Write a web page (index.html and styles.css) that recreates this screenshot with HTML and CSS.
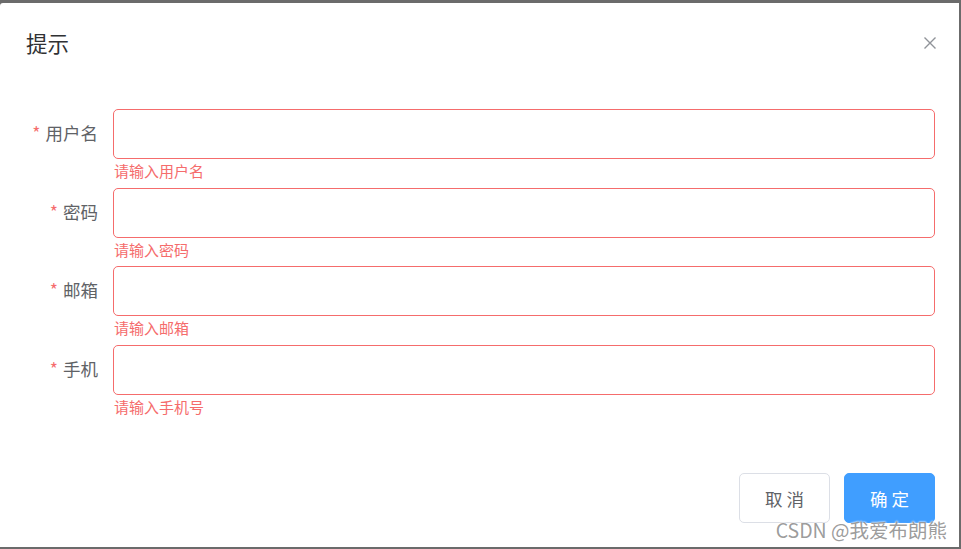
FILE: index.html
```html
<!DOCTYPE html>
<html lang="zh">
<head>
<meta charset="utf-8">
<title>提示</title>
<link rel="stylesheet" href="styles.css">
</head>
<body>
<div class="dialog">
  <div class="dialog-header">
    <span class="dialog-title">提示</span>
    <button class="dialog-close" aria-label="关闭">
      <svg width="14" height="14" viewBox="0 0 14 14"><path d="M1.5 1.5 L12.5 12.5 M12.5 1.5 L1.5 12.5" stroke="#909399" stroke-width="1.4" fill="none"/></svg>
    </button>
  </div>
  <div class="dialog-body">
    <form class="form">
      <div class="form-item">
        <label class="form-label"><span class="req">*</span>用户名</label>
        <div class="form-content">
          <input class="input" type="text">
          <div class="form-error">请输入用户名</div>
        </div>
      </div>
      <div class="form-item">
        <label class="form-label"><span class="req">*</span>密码</label>
        <div class="form-content">
          <input class="input" type="password">
          <div class="form-error">请输入密码</div>
        </div>
      </div>
      <div class="form-item">
        <label class="form-label"><span class="req">*</span>邮箱</label>
        <div class="form-content">
          <input class="input" type="text">
          <div class="form-error">请输入邮箱</div>
        </div>
      </div>
      <div class="form-item">
        <label class="form-label"><span class="req">*</span>手机</label>
        <div class="form-content">
          <input class="input" type="text">
          <div class="form-error">请输入手机号</div>
        </div>
      </div>
    </form>
  </div>
  <div class="dialog-footer">
    <button class="btn btn-default">取消</button>
    <button class="btn btn-primary">确定</button>
  </div>
  <div class="watermark">CSDN @我爱布朗熊</div>
</div>
</body>
</html>
```
FILE: styles.css
```css
* { box-sizing: border-box; }
html, body { margin: 0; padding: 0; }
body {
  background: #6b6b6b;
  width: 961px;
  height: 549px;
  overflow: hidden;
  font-family: "Noto Sans CJK SC", "Liberation Sans", sans-serif;
}
.dialog {
  position: relative;
  margin: 3px 2px 2px 0;
  height: 544px;
  background: #fff;
  border-radius: 3px 0 0 0;
  display: flex;
  flex-direction: column;
}
.dialog-header {
  padding: 25px 25px 12px 26px;
  display: flex;
  align-items: center;
  justify-content: space-between;
}
.dialog-title {
  font-size: 21.5px;
  line-height: 30px;
  color: #303133;
}
.dialog-close {
  border: 0;
  background: none;
  padding: 0;
  margin-right: -3px;
  width: 14px;
  height: 14px;
  display: flex;
  cursor: pointer;
}
.dialog-body {
  padding: 39px 24px 38px 25px;
}
.form {
  display: flex;
  flex-direction: column;
  gap: 28.5px;
}
.form-item {
  display: flex;
  align-items: flex-start;
}
.form-label {
  width: 88px;
  flex: none;
  padding-right: 15px;
  text-align: right;
  font-size: 17.5px;
  line-height: 48px;
  color: #606266;
}
.req {
  color: #f56c6c;
  margin-right: 5px;
}
.form-content {
  flex: 1;
  position: relative;
}
.input {
  display: block;
  width: 100%;
  height: 50px;
  border: 1px solid #f56c6c;
  border-radius: 5px;
  outline: none;
  background: #fff;
  padding: 0 18px;
  font-size: 17.5px;
}
.form-error {
  position: absolute;
  left: 1px;
  top: 100%;
  padding-top: 4px;
  font-size: 15px;
  line-height: 16px;
  color: #f56c6c;
}
.dialog-footer {
  margin-top: auto;
  padding: 12px 24px 24px;
  display: flex;
  justify-content: flex-end;
  gap: 14px;
}
.btn {
  width: 91px;
  height: 50px;
  border-radius: 5px;
  font-family: inherit;
  font-size: 17.5px;
  letter-spacing: 4px;
  text-indent: 4px;
  cursor: pointer;
}
.btn-default {
  background: #fff;
  border: 1px solid #dcdfe6;
  color: #606266;
}
.btn-primary {
  background: #409eff;
  border: 1px solid #409eff;
  color: #fff;
}
.watermark {
  position: absolute;
  right: 12px;
  bottom: 5px;
  font-size: 19.5px;
  line-height: 24px;
  color: rgba(130, 130, 130, 0.8);
  text-shadow: 0 0 2px #fff, 0 0 2px #fff;
  pointer-events: none;
}
```
